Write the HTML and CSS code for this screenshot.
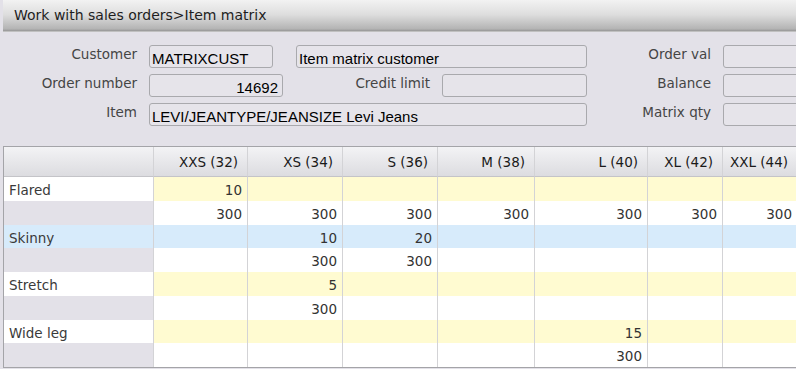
FILE: index.html
```html
<!DOCTYPE html>
<html lang="en">
<head>
  <meta charset="UTF-8" />
  <title>Item matrix</title>
  <link rel="stylesheet" href="styles.css">
</head>
<body>

<div class="window">
  <!-- Title -->
  <div class="titlebar">Work with sales orders&gt;Item matrix</div>

  <!-- Order header fields -->
  <div class="form">
    <div class="form-row">
      <span class="label lbl-left">Customer</span>
      <span class="field f-cust">MATRIXCUST</span>
      <span class="field f-name">Item matrix customer</span>
      <span class="label lbl-right">Order val</span>
      <span class="field f-side"></span>
    </div>
    <div class="form-row">
      <span class="label lbl-left">Order number</span>
      <span class="field f-order num">14692</span>
      <span class="label lbl-mid">Credit limit</span>
      <span class="field f-credit"></span>
      <span class="label lbl-right">Balance</span>
      <span class="field f-side"></span>
    </div>
    <div class="form-row">
      <span class="label lbl-left">Item</span>
      <span class="field f-item">LEVI/JEANTYPE/JEANSIZE Levi Jeans</span>
      <span class="label lbl-right">Matrix qty</span>
      <span class="field f-side"></span>
    </div>
  </div>

  <!-- Size / type matrix -->
  <div class="matrix">
    <div class="cell head"></div>
    <div class="cell head">XXS (32)</div>
    <div class="cell head">XS (34)</div>
    <div class="cell head">S (36)</div>
    <div class="cell head">M (38)</div>
    <div class="cell head">L (40)</div>
    <div class="cell head">XL (42)</div>
    <div class="cell head">XXL (44)</div>

    <div class="cell name">Flared</div>
    <div class="cell qty">10</div>
    <div class="cell qty"></div>
    <div class="cell qty"></div>
    <div class="cell qty"></div>
    <div class="cell qty"></div>
    <div class="cell qty"></div>
    <div class="cell qty"></div>

    <div class="cell sub"></div>
    <div class="cell stock">300</div>
    <div class="cell stock">300</div>
    <div class="cell stock">300</div>
    <div class="cell stock">300</div>
    <div class="cell stock">300</div>
    <div class="cell stock">300</div>
    <div class="cell stock">300</div>

    <div class="cell name sel">Skinny</div>
    <div class="cell qty sel"></div>
    <div class="cell qty sel">10</div>
    <div class="cell qty sel">20</div>
    <div class="cell qty sel"></div>
    <div class="cell qty sel"></div>
    <div class="cell qty sel"></div>
    <div class="cell qty sel"></div>

    <div class="cell sub"></div>
    <div class="cell stock"></div>
    <div class="cell stock">300</div>
    <div class="cell stock">300</div>
    <div class="cell stock"></div>
    <div class="cell stock"></div>
    <div class="cell stock"></div>
    <div class="cell stock"></div>

    <div class="cell name">Stretch</div>
    <div class="cell qty"></div>
    <div class="cell qty">5</div>
    <div class="cell qty"></div>
    <div class="cell qty"></div>
    <div class="cell qty"></div>
    <div class="cell qty"></div>
    <div class="cell qty"></div>

    <div class="cell sub"></div>
    <div class="cell stock"></div>
    <div class="cell stock">300</div>
    <div class="cell stock"></div>
    <div class="cell stock"></div>
    <div class="cell stock"></div>
    <div class="cell stock"></div>
    <div class="cell stock"></div>

    <div class="cell name">Wide leg</div>
    <div class="cell qty"></div>
    <div class="cell qty"></div>
    <div class="cell qty"></div>
    <div class="cell qty"></div>
    <div class="cell qty">15</div>
    <div class="cell qty"></div>
    <div class="cell qty"></div>

    <div class="cell sub"></div>
    <div class="cell stock"></div>
    <div class="cell stock"></div>
    <div class="cell stock"></div>
    <div class="cell stock"></div>
    <div class="cell stock">300</div>
    <div class="cell stock"></div>
    <div class="cell stock"></div>
  </div>
</div>

</body>
</html>
```

FILE: styles.css
```css
* {
  margin: 0;
  padding: 0;
  box-sizing: border-box;
}

body {
  font-family: "DejaVu Sans", Verdana, sans-serif;
  font-size: 13.5px;
  background-color: #e3e1e8;
  overflow: hidden;
}

.window {
  width: 796px;
  height: 369px;
  padding-left: 3px;
  overflow: hidden;
}

.titlebar {
  width: 801px;
  height: 32px;
  padding: 7px 0 0 11px;
  font-size: 14px;
  color: #1e1e1e;
  background: linear-gradient(#f2f2f2 0%, #dedede 45%, #b4b4b4 90%, #9a9a9a 96%, #d8d8d8 100%);
}

/* Form */
.form {
  display: flex;
  flex-direction: column;
  gap: 6px;
  padding: 13px 0 20px 0;
  width: 900px;
}

.form-row {
  display: flex;
  height: 23px;
}

.label {
  color: #454545;
  text-align: right;
  line-height: 17px;
  padding-top: 1px;
  margin-right: 12px;
  white-space: nowrap;
}

.lbl-left { width: 134px; }
.lbl-mid { width: 147px; }
.lbl-right { width: 124px; }

.field {
  height: 23px;
  border: 1px solid #a9a9ad;
  border-radius: 3px;
  background-color: #e6e4ea;
  font-family: "Liberation Sans", Arial, sans-serif;
  font-size: 15px;
  color: #000;
  padding: 4px 0 0 2px;
  white-space: nowrap;
}

.field.num {
  text-align: right;
  padding-right: 4px;
}

.f-cust { width: 124px; margin-right: 23px; }
.f-name { width: 291px; }
.f-order { width: 134px; }
.f-credit { width: 145px; }
.f-item { width: 438px; }
.f-side { width: 90px; }

/* Matrix */
.matrix {
  display: grid;
  grid-template-columns: 150px 94px 95px 95px 97px 113px 75px 75px;
  grid-template-rows: 30px;
  grid-auto-rows: 23.75px;
  width: 801px;
  border-top: 1px solid #a4a4a8;
  border-left: 1px solid #a4a4a8;
  border-bottom: 1px solid #a4a4a8;
  color: #333;
}

.cell {
  border-right: 1px solid #d3d3d6;
  text-align: right;
  padding: 2px 5px 0 0;
  line-height: 22px;
  white-space: nowrap;
}

.head {
  background: linear-gradient(#f3f3f5, #dcdce0);
  border-bottom: 1px solid #c4c4c8;
  color: #1a1a1a;
  line-height: 26px;
  padding: 2px 9px 0 0;
}

.name {
  background-color: #fff;
  text-align: left;
  padding-left: 5px;
  color: #3a3a3a;
}

.sub {
  background-color: #e3e1e8;
}

.qty {
  background-color: #fffbd1;
}

.stock {
  background-color: #fff;
}

.sel {
  background-color: #d7ebfb;
}
```
